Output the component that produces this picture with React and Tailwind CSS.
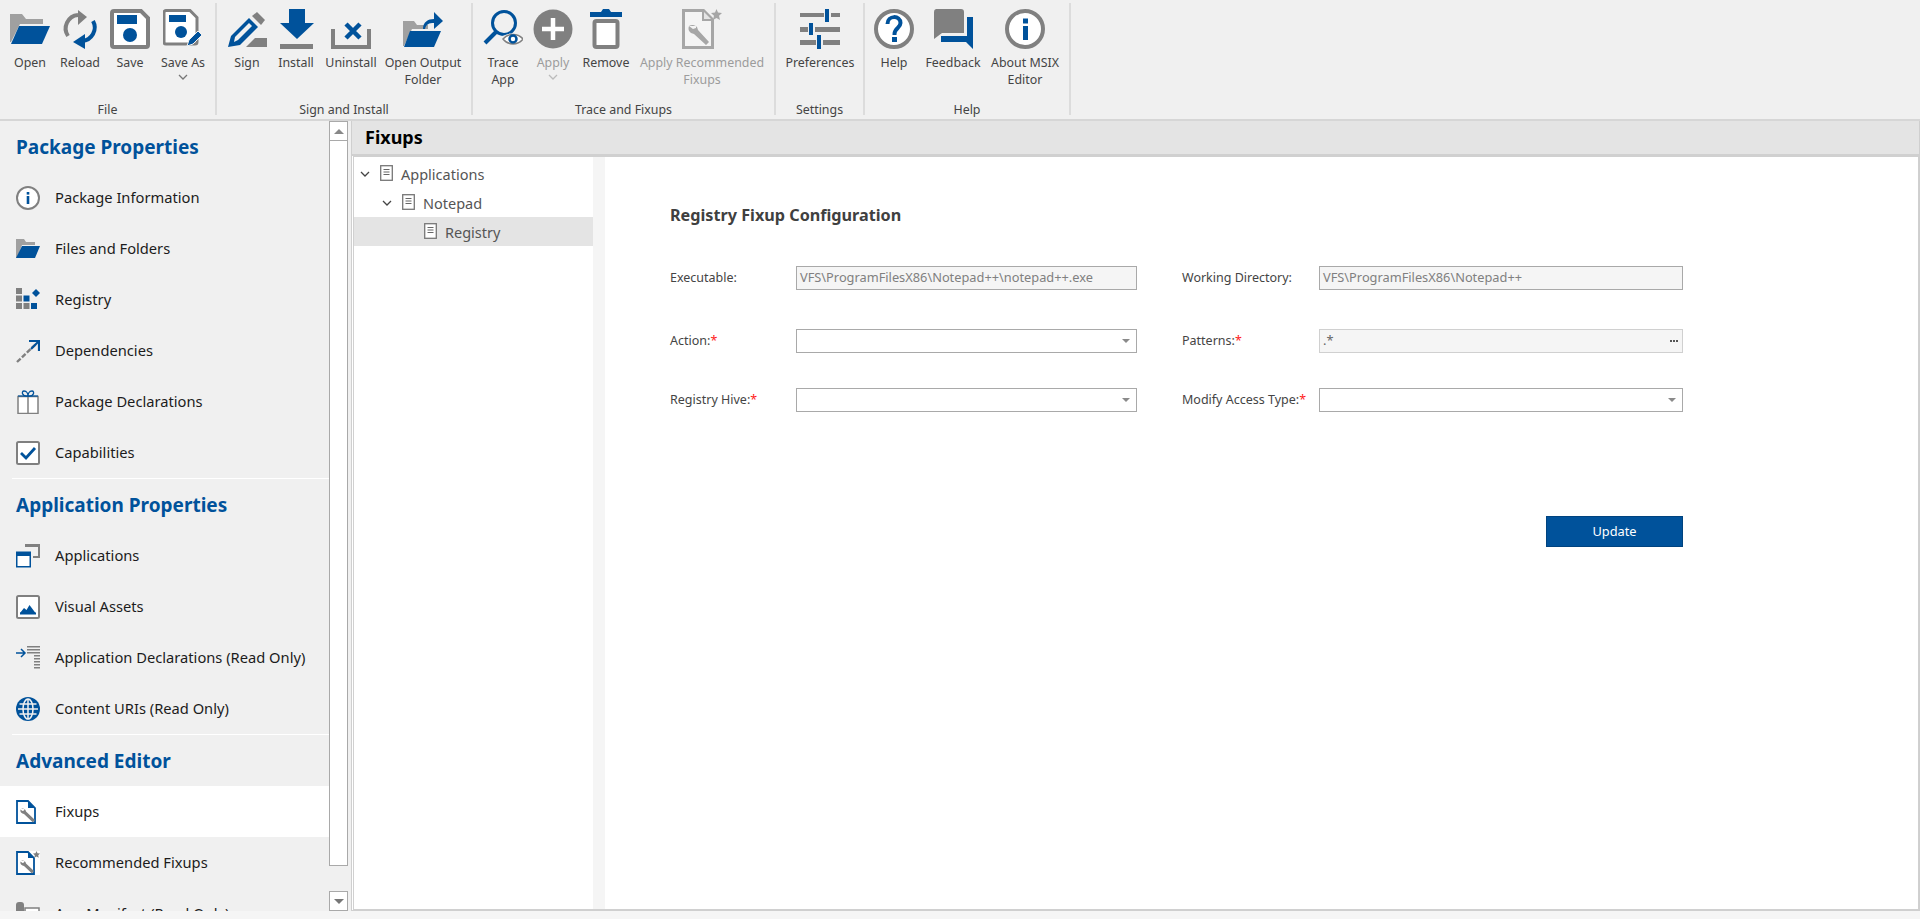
import React from "react";

const B = "#00529b";
const G = "#808080";
const L = "#a6a6a6";

const I = ({ s = 40, v = 40, children }) => (
  <svg width={s} height={s} viewBox={`0 0 ${v} ${v}`} className="shrink-0 block">{children}</svg>
);

const Floppy = ({ small }) =>
  small ? (
    <I>
      <path d="M3 1.500h24l7 7v24.500a2 2 0 0 1-2 2H3a2 2 0 0 1-2-2V3.500a2 2 0 0 1 2-2z" fill="#fff" stroke={G} strokeWidth="3" />
      <rect x="6" y="6" width="17" height="7" fill={B} />
      <circle cx="18" cy="23" r="6" fill={B} />
      <path d="M24 37l2-6 9-9 4 4-9 9z" fill={B} stroke="#f0f0f0" strokeWidth="1" />
    </I>
  ) : (
    <I>
      <path d="M4 2h27l7 7v27a2 2 0 0 1-2 2H4a2 2 0 0 1-2-2V4a2 2 0 0 1 2-2z" fill="#fff" stroke={G} strokeWidth="4" />
      <rect x="7" y="6" width="20" height="9" fill={B} />
      <circle cx="20" cy="26" r="7" fill={B} />
    </I>
  );

const ic = {
  open: (
    <I>
      <path d="M0 5h12l4 5h17v5H10L1 33H0z" fill="#a0a0a0" />
      <path d="M9 17h31l-8 18H1z" fill={B} />
    </I>
  ),
  reload: (
    <I>
      <path d="M8 27a13.500 13.500 0 0 1 10-21" fill="none" stroke={G} strokeWidth="4" />
      <path d="M18 1l9 7-9 8z" fill={G} />
      <path d="M33 12a13.500 13.500 0 0 1-11 20" fill="none" stroke={B} strokeWidth="4" />
      <path d="M25 25l-12 8 12 7z" fill={B} />
    </I>
  ),
  save: <Floppy />,
  saveas: <Floppy small />,
  sign: (
    <I>
      <path d="M1 38l3-11L22 9l9 9-18 18z" fill={B} />
      <path d="M7 33l1-5L22 14l3 3-14 14z" fill="#f0f0f0" />
      <path d="M25 7l5-4 8 8-4 5z" fill={G} />
      <path d="M19 38l9-9h12v9z" fill={G} />
    </I>
  ),
  install: (
    <I>
      <path d="M13 0h16v14h9L21 30 4 14h9z" fill={B} />
      <rect x="4" y="35" width="33" height="5" fill={G} />
    </I>
  ),
  uninstall: (
    <I>
      <path d="M2 20v18h36V20" fill="none" stroke={G} strokeWidth="4" />
      <path d="M15 15l14 14M29 15L15 29" stroke={B} strokeWidth="4.500" fill="none" />
    </I>
  ),
  output: (
    <I>
      <path d="M0 12h11l3 4h11v4H9L1 37H0z" fill="#a0a0a0" />
      <path d="M7 22h31l-7 16H1z" fill={B} />
      <path d="M20 20c0-7 5-10 11-10V3l9 9-9 8v-6c-5 0-8 1-9 6z" fill={B} />
    </I>
  ),
  trace: (
    <I>
      <circle cx="21" cy="14" r="11.500" fill="none" stroke={B} strokeWidth="3" />
      <path d="M13 23L2 34" stroke={B} strokeWidth="4" />
      <path d="M17 30c5-7 14-7 23-1-5 8-17 9-23 1z" fill="#f0f0f0" />
      <path d="M20 30c5-6 15-6 20 0-5 6.500-15 6.500-20 0z" fill="#fff" stroke={G} strokeWidth="1.500" />
      <circle cx="30" cy="30" r="3.500" fill="#fff" stroke={B} strokeWidth="2.500" />
    </I>
  ),
  apply: (
    <I>
      <circle cx="20" cy="20" r="19.500" fill={G} />
      <path d="M20 9v22M9 20h22" stroke="#fff" strokeWidth="4.500" />
    </I>
  ),
  remove: (
    <I>
      <rect x="8.500" y="12" width="23" height="26" rx="2" fill="#fff" stroke={G} strokeWidth="4" />
      <path d="M4 3h11l2-3h6l2 3h11v5H4z" fill={B} />
    </I>
  ),
  applyrec: (
    <I>
      <path d="M1.500 1.500h20l9 9v28h-29z" fill="#f4f4f4" stroke={L} strokeWidth="3" />
      <path d="M21 2v9h9" fill="#e4e4e4" stroke={L} strokeWidth="2" />
      <path d="M7 17a6 6 0 0 1 8 1l1 3 11 12-3 3-12-11-3-1a6 6 0 0 1-2-7l4 3 3-1v-2z" fill={L} />
      <path d="M34.500 0l1.500 3.500 4 .5-3 2.800 1 4.200-3.500-2-3.500 2 1-4.200-3-2.800 4-.5z" fill={L} />
    </I>
  ),
  prefs: (
    <I>
      <path d="M0 4h24v4H0zM31 4h9v4H31zM0 18h8v5H0zM15 18h25v5H15zM0 31h16v5H0zM23 31h17v5H23z" fill={G} />
      <path d="M25 0h4v13h-4zM9 14h4v12H9zM17 26h4v14h-4z" fill={B} />
    </I>
  ),
  help: (
    <I>
      <circle cx="20" cy="20" r="18" fill="#fff" stroke={G} strokeWidth="4" />
      <path d="M13.500 15c0-9 13-9 13-1 0 5-6 5-6 11v1" fill="none" stroke={B} strokeWidth="4" />
      <rect x="18" y="28" width="5" height="5" fill={B} />
    </I>
  ),
  feedback: (
    <I>
      <path d="M3 0h25a3 3 0 0 1 3 3v21H9l-8 6V3a3 3 0 0 1 2-3z" fill={G} />
      <path d="M34 8h6v32l-7-7H8v-6h26z" fill={B} />
    </I>
  ),
  about: (
    <I>
      <circle cx="20" cy="20" r="18" fill="#fff" stroke={G} strokeWidth="4" />
      <rect x="18" y="9.500" width="5" height="5" fill={B} />
      <rect x="18" y="17" width="5" height="14" fill={B} />
    </I>
  ),
};

const side = {
  info: (
    <I s={24} v={24}>
      <circle cx="12" cy="12" r="11" fill="#fff" stroke={G} strokeWidth="2" />
      <rect x="10.700" y="6" width="2.600" height="2.600" fill={B} />
      <rect x="10.700" y="10" width="2.600" height="8" fill={B} />
    </I>
  ),
  folder: (
    <I s={24} v={24}>
      <path d="M0 2h8l2 3h9v3H6L1 21H0z" fill="#a0a0a0" />
      <path d="M6 9h18l-5 12H0z" fill={B} />
    </I>
  ),
  registry: (
    <I s={24} v={24}>
      <path d="M0 0h6v6H0zM0 7.500h6v6H0zM0 15h6v6H0zM7.500 15h6v6h-6z" fill={G} />
      <path d="M7.500 7.500h6v6h-6zM15 15h6v6h-6z" fill={B} />
      <path d="M20 1l4 4-4 4-4-4z" fill={B} />
    </I>
  ),
  deps: (
    <I s={24} v={24}>
      <path d="M1 23L20 5" stroke={G} strokeWidth="2.400" strokeDasharray="5 1.800" />
      <path d="M13 2h10v10" fill="none" stroke={B} strokeWidth="2.200" />
      <path d="M15 10l7-7" stroke={B} strokeWidth="2.200" />
    </I>
  ),
  gift: (
    <I s={24} v={24}>
      <rect x="2" y="6.500" width="20" height="17" fill="#fff" stroke={G} strokeWidth="1.500" />
      <path d="M12 6.500v17" stroke={G} strokeWidth="1.500" />
      <path d="M12 6C6 7 5 1 8 1s4 3 4 5c0-2 1-5 4-5s2 6-4 5z" fill="none" stroke={B} strokeWidth="1.300" />
      <path d="M2 6h20" stroke={B} strokeWidth="1.200" />
    </I>
  ),
  caps: (
    <I s={24} v={24}>
      <rect x="1" y="1" width="22" height="22" rx="1.500" fill="#fff" stroke={G} strokeWidth="2" />
      <path d="M5 12l5 5 9-10" fill="none" stroke={B} strokeWidth="2.800" />
    </I>
  ),
  apps: (
    <I s={24} v={24}>
      <path d="M9 0h15v14h-7v-2h5V3H9z" fill={G} />
      <path d="M0 7.500h15v16H0z" fill={B} />
      <rect x="1.500" y="12" width="12" height="10" fill="#fff" />
    </I>
  ),
  image: (
    <I s={24} v={24}>
      <rect x="1" y="1" width="22" height="22" rx="1.500" fill="#fff" stroke={G} strokeWidth="2" />
      <path d="M4 18l4-5 2.500 2 3-5 6 8z" fill={B} />
      <rect x="4" y="17.500" width="16" height="2" fill={B} />
    </I>
  ),
  decl: (
    <I s={24} v={24}>
      <path d="M0 7h8M5 3l4 4-4 4" fill="none" stroke={B} strokeWidth="1.500" />
      <path d="M11 0h13v1.500H11zM11 3h13v1.500H11zM11 6h13v1.500H11zM18 9h6v1.500h-6zM18 12h6v1.500h-6zM18 15h6v1.500h-6zM18 18h6v1.500h-6zM18 21h6v1.500h-6z" fill={G} />
    </I>
  ),
  globe: (
    <I s={24} v={24}>
      <circle cx="12" cy="12" r="12" fill={B} />
      <g fill="none" stroke="#f0f0f0" strokeWidth="1.500">
        <ellipse cx="12" cy="12" rx="5" ry="10" />
        <path d="M12 2v20M2 12h20M3.500 7h17M3.500 17h17" />
      </g>
    </I>
  ),
  fixups: (
    <I s={24} v={24}>
      <path d="M1 1h11l7 7v15H1z" fill="#fff" stroke={B} strokeWidth="1.800" />
      <path d="M12 1v7h7z" fill={B} />
      <path d="M5 9a3.500 3.500 0 0 1 4.500 1l.5 1.500 9 8.500-2 2.500-9-8.500-1.500-.5a3.500 3.500 0 0 1-2-4l2 1.500 1.500-.5.500-1.500z" fill={G} />
    </I>
  ),
  rec: (
    <I s={24} v={24}>
      <rect x="13" y="0" width="11" height="24" fill="#fff" />
      <path d="M1 1h11l6 6v16H1z" fill="#fff" stroke={B} strokeWidth="1.800" />
      <path d="M12 1v6h6z" fill={B} />
      <path d="M5 10a3.500 3.500 0 0 1 4.500 1l.5 1.500 8 7.500-2 2.500-8-7.500-1.500-.5a3.500 3.500 0 0 1-2-4l2 1.500 1.500-.5.500-1.500z" fill={G} />
      <path d="M20.500 0l1 2.200 2.500.3-1.800 1.700.5 2.500-2.200-1.200-2.200 1.200.5-2.500L17 2.500l2.500-.3z" fill={G} />
    </I>
  ),
  manifest: (
    <I s={24} v={24}>
      <path d="M0 24V3a3 3 0 0 1 3-3h2a3 3 0 0 1 3 3v21z" fill={G} />
      <rect x="9" y="6" width="14" height="17" fill="#fff" stroke={G} strokeWidth="1.500" />
      <path d="M13 10.500h7M13 13h7" stroke={B} strokeWidth="1.200" />
    </I>
  ),
};

const Chevron = ({ color = "#888" }) => (
  <svg width="10" height="6" viewBox="0 0 10 6" className="block">
    <path d="M1 1l4 4 4-4" fill="none" stroke={color} strokeWidth="1.300" />
  </svg>
);

const RibbonBtn = ({ w, icon, label, dim, chevron }) => (
  <div className={`${w} shrink-0 flex flex-col items-center`}>
    {icon}
    <div className={`mt-[5px] text-center whitespace-nowrap text-[12.400px] leading-[17px] ${dim ? "text-[#9c9c9c]" : "text-[#444444]"}`}>
      {label}
      {chevron && <div className="flex justify-center mt-[3px]"><Chevron color={dim ? "#bbb" : "#777"} /></div>}
    </div>
  </div>
);

const Group = ({ w, px, title, children }) => (
  <div className={`${w} shrink-0 h-[112px] mt-[3px] flex flex-col border-r-2 border-[#dcdcdc]`}>
    <div className={`flex pt-[6px] flex-1 ${px}`}>{children}</div>
    <div className="text-center text-[12.400px] text-[#444444] leading-[17px] h-[14px]">{title}</div>
  </div>
);

const Row = ({ icon, label, active }) => (
  <div className={`h-[51px] shrink-0 flex items-center pl-4 ${active ? "bg-white" : ""}`}>
    <div className="w-[39px] shrink-0">{icon}</div>
    <span className="text-[14.700px] text-[#1c1c1c] whitespace-nowrap">{label}</span>
  </div>
);

const Heading = ({ children }) => (
  <div className="h-[51px] shrink-0 pl-4 pt-[2px] flex items-center text-[19px] font-bold text-[#00529b]">{children}</div>
);

const DocIcon = () => (
  <svg width="13" height="16" viewBox="0 0 13 16" className="block shrink-0">
    <rect x="0.700" y="0.700" width="11.600" height="14.600" fill="#fff" stroke="#777" strokeWidth="1.300" />
    <path d="M3.500 4.500h6M3.500 7h6M3.500 9.500h6" stroke="#666" strokeWidth="1" />
  </svg>
);

const TreeRow = ({ pad, label, chev, sel }) => (
  <div className={`h-[29px] flex items-center ${pad} ${sel ? "bg-[#e4e4e4]" : ""}`}>
    <div className="w-[20px] shrink-0">{chev && <Chevron color="#444" />}</div>
    <div className="-mt-[1px]"><DocIcon /></div>
    <span className="ml-[8px] pt-[3px] text-[14.500px] text-[#555555]">{label}</span>
  </div>
);

const Req = () => <span className="text-[#ff2020]">*</span>;

const Label = ({ w, children }) => (
  <div className={`${w} shrink-0 pt-[1px] text-[12.500px] text-[#444444] whitespace-nowrap`}>{children}</div>
);

const Text = ({ w, value }) => (
  <div className={`${w} h-6 border border-[#a9a9a9] bg-[#f5f5f5] flex items-center px-[3px] text-[12.800px] text-[#808080]`}>{value}</div>
);

const Combo = ({ w }) => (
  <div className={`${w} h-6 border border-[#a9a9a9] bg-white flex items-center justify-end pr-[6px]`}>
    <div className="w-0 h-0 border-x-[4px] border-x-transparent border-t-[4px] border-t-[#8a8a8a]" />
  </div>
);

const Arrow = ({ up }) => (
  <div className={`w-0 h-0 border-x-[5px] border-x-transparent ${up ? "border-b-[5px] border-b-[#888888]" : "border-t-[5px] border-t-[#777777]"}`} />
);

export default function App() {
  return (
    <div className="w-[1920px] h-[919px] overflow-hidden flex flex-col bg-[#f5f5f5] font-['Noto_Sans',sans-serif]">
      <div className="h-[121px] shrink-0 flex bg-[#f0f0f0] border-b-2 border-[#d6d6d6]">
        <Group w="w-[217px]" px="pl-[5px]" title="File">
          <RibbonBtn w="w-[50px]" icon={ic.open} label="Open" />
          <RibbonBtn w="w-[50px]" icon={ic.reload} label="Reload" />
          <RibbonBtn w="w-[50px]" icon={ic.save} label="Save" />
          <RibbonBtn w="w-[56px]" icon={ic.saveas} label="Save As" chevron />
        </Group>
        <Group w="w-[256px]" px="pl-[5px]" title="Sign and Install">
          <RibbonBtn w="w-[50px]" icon={ic.sign} label="Sign" />
          <RibbonBtn w="w-[48px]" icon={ic.install} label="Install" />
          <RibbonBtn w="w-[62px]" icon={ic.uninstall} label="Uninstall" />
          <RibbonBtn w="w-[82px]" icon={ic.output} label={<>Open Output<br />Folder</>} />
        </Group>
        <Group w="w-[303px]" px="pl-[2px]" title="Trace and Fixups">
          <RibbonBtn w="w-[56px]" icon={ic.trace} label={<>Trace<br />App</>} />
          <RibbonBtn w="w-[44px]" icon={ic.apply} label="Apply" dim chevron />
          <RibbonBtn w="w-[62px]" icon={ic.remove} label="Remove" />
          <RibbonBtn w="w-[130px]" icon={ic.applyrec} label={<>Apply Recommended<br />Fixups</>} dim />
        </Group>
        <Group w="w-[89px]" px="pl-[2px]" title="Settings">
          <RibbonBtn w="w-[84px]" icon={ic.prefs} label="Preferences" />
        </Group>
        <Group w="w-[206px]" px="pl-[1px]" title="Help">
          <RibbonBtn w="w-[56px]" icon={ic.help} label="Help" />
          <RibbonBtn w="w-[62px]" icon={ic.feedback} label="Feedback" />
          <RibbonBtn w="w-[82px]" icon={ic.about} label={<>About MSIX<br />Editor</>} />
        </Group>
      </div>

      <div className="h-[790px] shrink-0 flex">
        <div className="w-[329px] shrink-0 overflow-hidden bg-[#f0f0f0] flex flex-col">
          <Heading>Package Properties</Heading>
          <Row icon={side.info} label="Package Information" />
          <Row icon={side.folder} label="Files and Folders" />
          <Row icon={side.registry} label="Registry" />
          <Row icon={side.deps} label="Dependencies" />
          <Row icon={side.gift} label="Package Declarations" />
          <Row icon={side.caps} label="Capabilities" />
          <div className="h-px ml-3 bg-white shrink-0" />
          <Heading>Application Properties</Heading>
          <Row icon={side.apps} label="Applications" />
          <Row icon={side.image} label="Visual Assets" />
          <Row icon={side.decl} label="Application Declarations (Read Only)" />
          <Row icon={side.globe} label="Content URIs (Read Only)" />
          <div className="h-px ml-3 bg-white shrink-0" />
          <Heading>Advanced Editor</Heading>
          <Row icon={side.fixups} label="Fixups" active />
          <Row icon={side.rec} label="Recommended Fixups" />
          <Row icon={side.manifest} label="App Manifest (Read Only)" />
        </div>

        <div className="w-[19px] shrink-0 flex flex-col bg-[#f0f0f0]">
          <div className="h-[20px] border border-[#a9a9a9] bg-white flex items-center justify-center"><Arrow up /></div>
          <div className="h-[725px] border-x border-b border-[#a9a9a9] bg-white" />
          <div className="flex-1" />
          <div className="h-[20px] border border-[#a9a9a9] bg-white flex items-center justify-center"><Arrow /></div>
        </div>

        <div className="w-[3px] shrink-0 bg-[#f0f0f0]" />

        <div className="flex-1 flex flex-col border-x border-b border-[#cfcfcf] bg-white">
          <div className="h-[35px] shrink-0 bg-[#e4e4e4] border-b-2 border-[#d0d0d0] pl-[13px] flex items-center text-[18px] font-bold text-black">Fixups</div>
          <div className="flex-1 flex border border-[#d0d0d0] ml-px">
            <div className="w-[239px] shrink-0 pt-[2px] bg-white">
              <TreeRow pad="pl-[6px]" label="Applications" chev />
              <TreeRow pad="pl-[28px]" label="Notepad" chev />
              <TreeRow pad="pl-[50px]" label="Registry" sel />
            </div>
            <div className="w-[12px] shrink-0 bg-[#f5f5f5]" />
            <div className="flex-1 bg-white pl-[65px] pt-[47px]">
              <div className="text-[16.200px] leading-[22px] font-bold text-[#404040]">Registry Fixup Configuration</div>
              <div className="mt-[40px] flex items-center">
                <Label w="w-[126px]">Executable:</Label>
                <Text w="w-[341px]" value="VFS\ProgramFilesX86\Notepad++\notepad++.exe" />
                <div className="w-[45px]" />
                <Label w="w-[137px]">Working Directory:</Label>
                <Text w="w-[364px]" value="VFS\ProgramFilesX86\Notepad++" />
              </div>
              <div className="mt-[39px] flex items-center">
                <Label w="w-[126px]">Action:<Req /></Label>
                <Combo w="w-[341px]" />
                <div className="w-[45px]" />
                <Label w="w-[137px]">Patterns:<Req /></Label>
                <div className="w-[364px] h-6 border border-[#d0d0d0] bg-[#f5f5f5] flex items-center justify-between px-[3px] text-[12.800px] text-[#666666]">
                  <span>.*</span>
                  <span className="flex gap-[1px] pr-[1px]">
                    <span className="w-[2px] h-[2px] bg-[#555555]" />
                    <span className="w-[2px] h-[2px] bg-[#555555]" />
                    <span className="w-[2px] h-[2px] bg-[#555555]" />
                  </span>
                </div>
              </div>
              <div className="mt-[35px] flex items-center">
                <Label w="w-[126px]">Registry Hive:<Req /></Label>
                <Combo w="w-[341px]" />
                <div className="w-[45px]" />
                <Label w="w-[137px]">Modify Access Type:<Req /></Label>
                <Combo w="w-[364px]" />
              </div>
              <div className="mt-[104px] w-[1013px] flex justify-end">
                <div className="w-[137px] h-[31px] pt-[1px] bg-[#00529b] border border-[#00437f] flex items-center justify-center text-[12.800px] text-white">Update</div>
              </div>
            </div>
          </div>
        </div>
      </div>
    </div>
  );
}
